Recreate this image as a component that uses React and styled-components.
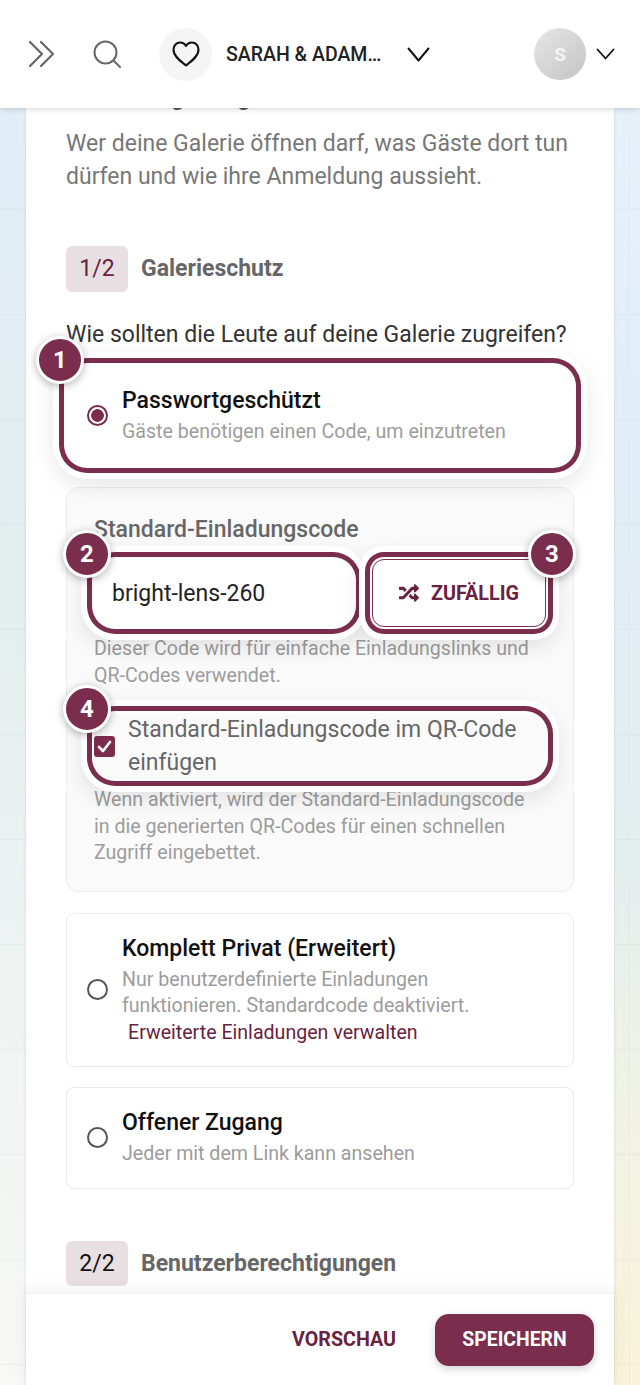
import React from "react";
import styled, { createGlobalStyle } from "styled-components";
import { FaRandom } from "react-icons/fa";

const PLUM = "#7b2d4e";
const PLUM_DARK = "#69223f";

const Global = createGlobalStyle`
  html, body { margin: 0; padding: 0; }
  body { font-family: Roboto, "Liberation Sans", sans-serif; background: #f2f5f5; }
  * { box-sizing: border-box; }
`;

const Page = styled.div`
  width: 640px;
  height: 1385px;
  display: flex;
  flex-direction: column;
  overflow: hidden;
  background-color: #f2f4f2;
  background-image:
    repeating-linear-gradient(180deg, transparent 0 104px, rgba(120, 140, 150, 0.08) 104px 105px),
    repeating-linear-gradient(90deg, transparent 0 104px, rgba(120, 140, 150, 0.06) 104px 105px),
    radial-gradient(circle 520px at 100% 100%, rgba(250, 243, 212, 0.85), rgba(250, 243, 212, 0)),
    linear-gradient(205deg, #e8f2fb 0%, #e1edf7 26%, #e4eeee 53%, #f8f8f5 100%);
`;

const Header = styled.header`
  position: relative;
  z-index: 2;
  flex: 0 0 108px;
  height: 108px;
  background: #fff;
  box-shadow: 0 1px 6px rgba(0, 0, 0, 0.18);
  display: flex;
  align-items: center;
  padding: 0 25px 0 28px;
`;

const PlainIcon = styled.svg`
  display: block;
  flex: none;
  fill: none;
  stroke: ${(p) => p.$color || "#111"};
  stroke-linecap: round;
  stroke-linejoin: round;
`;

const SearchSlot = styled.div`
  margin-left: 37px;
  display: flex;
`;

const HeartCircle = styled.div`
  margin-left: 38px;
  width: 53px;
  height: 53px;
  border-radius: 50%;
  background: #f5f5f5;
  display: flex;
  align-items: center;
  justify-content: center;
`;

const EventName = styled.span`
  margin-left: 14px;
  width: 156px;
  font-size: 19.5px;
  font-weight: 500;
  color: #222;
  white-space: nowrap;
  overflow: hidden;
  text-overflow: ellipsis;
`;

const EventChevron = styled.div`
  margin-left: 25px;
  display: flex;
`;

const Avatar = styled.div`
  margin-left: auto;
  width: 52px;
  height: 52px;
  border-radius: 50%;
  background: linear-gradient(135deg, #e6e6e6 0%, #c4c4c4 100%);
  color: #f5f5f5;
  font-size: 19px;
  font-weight: 700;
  display: flex;
  align-items: center;
  justify-content: center;
`;

const AvatarChevron = styled.div`
  margin-left: 10px;
  display: flex;
`;

const Main = styled.main`
  flex: 1;
  min-height: 0;
  padding: 0 26px;
  display: flex;
`;

const Sheet = styled.div`
  flex: 1;
  min-width: 0;
  background: #fff;
  box-shadow: 0 0 3px rgba(90, 110, 130, 0.2);
  display: flex;
  flex-direction: column;
`;

const Scroll = styled.div`
  flex: 1;
  min-height: 0;
  overflow: hidden;
  padding: 0 40px;
`;

const Heading = styled.h2`
  margin: -25px 0 13.5px;
  font-size: 23px;
  line-height: 30px;
  font-weight: 700;
  color: #555;
`;

const Description = styled.p`
  margin: 0 0 53px;
  font-size: 23px;
  line-height: 33px;
  color: #777;
`;

const SectionRow = styled.div`
  display: flex;
  align-items: center;
  gap: 13px;
`;

const StepTag = styled.span`
  width: 62px;
  height: ${(p) => p.$h}px;
  border-radius: 6px;
  background: #e8dfe3;
  color: ${(p) => p.$color};
  font-size: 23px;
  display: flex;
  align-items: center;
  justify-content: center;
`;

const SectionTitle = styled.span`
  font-size: 23px;
  font-weight: 700;
  color: #666;
`;

const Question = styled.p`
  margin: 26px 0 14px;
  font-size: 23px;
  line-height: 33px;
  color: #333;
`;

const Ring = `
  box-shadow:
    0 0 0 2px #fff,
    0 0 0 7px ${PLUM},
    0 0 0 13px #fff,
    0 8px 22px 12px rgba(0, 0, 0, 0.1);
`;

const OptionCard = styled.div`
  position: relative;
  display: flex;
  align-items: center;
  gap: 14px;
  padding: 20px 30px 20px 20px;
  margin-bottom: ${(p) => p.$mb}px;
  background: #fff;
  border: 1px solid ${(p) => (p.$active ? "#fff" : "#e9e9e9")};
  border-radius: ${(p) => (p.$active ? "21px" : "8px")};
  ${(p) => p.$active && Ring}
`;

const Radio = styled.span`
  flex: none;
  width: 21px;
  height: 21px;
  border-radius: 50%;
  border: 2px solid ${(p) => (p.$on ? PLUM : "#555")};
  background: ${(p) => (p.$on ? `radial-gradient(circle, ${PLUM} 0 6px, #fff 6.6px)` : "#fff")};
`;

const OptionText = styled.div`
  min-width: 0;
`;

const OptionTitle = styled.div`
  font-size: 23px;
  line-height: 30px;
  font-weight: 500;
  color: #111;
  margin-bottom: 3px;
`;

const OptionSub = styled.div`
  font-size: 19.6px;
  line-height: 26.5px;
  color: #9c9c9c;
`;

const ManageLink = styled.span`
  display: block;
  padding-left: 6px;
  color: ${PLUM_DARK};
`;

const Panel = styled.div`
  margin-bottom: 21px;
  padding: 27px 27px 24px;
  background: #fafafa;
  border: 1px solid #eeeeee;
  border-radius: 12px;
`;

const PanelLabel = styled.div`
  font-size: 23px;
  line-height: 30px;
  font-weight: 500;
  color: #666;
  margin-bottom: 14px;
`;

const CodeRow = styled.div`
  display: flex;
  gap: 18px;
  margin-bottom: 9px;
`;

const CodeInput = styled.div`
  position: relative;
  flex: 1;
  height: 68px;
  display: flex;
  align-items: center;
  padding: 0 18px;
  background: #fff;
  border-radius: 21px;
  font-size: 23px;
  color: #222;
  ${Ring}
`;

const ShuffleButton = styled.div`
  position: relative;
  flex: 0 0 174px;
  height: 68px;
  display: flex;
  align-items: center;
  justify-content: center;
  gap: 12px;
  background: #fff;
  border: 1.5px solid ${PLUM};
  border-radius: 12px;
  color: ${PLUM_DARK};
  font-size: 19.8px;
  font-weight: 700;
  ${Ring}
`;

const Hint = styled.div`
  font-size: 19.6px;
  line-height: 26.5px;
  color: #9c9c9c;
  max-width: 445px;
`;

const CheckRow = styled.div`
  position: relative;
  margin-top: 24px;
  margin-bottom: 8px;
  display: flex;
  align-items: center;
  gap: 13px;
  background: #fafafa;
  border-radius: 21px;
  ${Ring}
`;

const CheckBox = styled.span`
  flex: none;
  width: 21px;
  height: 21px;
  border-radius: 3px;
  background: ${PLUM};
  display: flex;
  align-items: center;
  justify-content: center;
`;

const CheckLabel = styled.span`
  font-size: 23px;
  line-height: 33px;
  color: #666;
`;

const Badge = styled.span`
  position: absolute;
  z-index: 1;
  top: ${(p) => p.$top}px;
  ${(p) => (p.$right ? "right: -31px;" : "left: -31px;")}
  width: 48px;
  height: 48px;
  border-radius: 50%;
  border: 3px solid #fff;
  background: ${PLUM};
  color: #fff;
  font-size: 24px;
  font-weight: 700;
  display: flex;
  align-items: center;
  justify-content: center;
  box-shadow: 0 2px 8px rgba(0, 0, 0, 0.3);
`;

const Footer = styled.footer`
  position: relative;
  flex: 0 0 92px;
  display: flex;
  align-items: center;
  justify-content: flex-end;
  gap: 39px;
  padding: 0 20px 0 0;
  background: #fff;
  border-top: 1px solid #f0f0f0;
  box-shadow: 0 -4px 14px rgba(0, 0, 0, 0.06);
`;

const PreviewButton = styled.span`
  color: ${PLUM_DARK};
  font-size: 19.7px;
  font-weight: 700;
`;

const SaveButton = styled.span`
  width: 159px;
  height: 52px;
  border-radius: 14px;
  background: ${PLUM};
  color: #fff;
  font-size: 19.4px;
  font-weight: 700;
  display: flex;
  align-items: center;
  justify-content: center;
  box-shadow: 0 3px 8px rgba(0, 0, 0, 0.18);
`;

const ChevronDown = ({ w, h, sw = 2 }) => (
  <PlainIcon width={w} height={h} viewBox={`0 0 ${w} ${h}`} strokeWidth={sw}>
    <polyline points={`1.5,1.5 ${w / 2},${h - 1.5} ${w - 1.5},1.5`} />
  </PlainIcon>
);

export default function App() {
  return (
    <Page>
      <Global />
      <Header>
        <PlainIcon $color="#666" width="28" height="28" viewBox="0 0 28 28" strokeWidth="2.2">
          <polyline points="2,2 14,14 2,26" />
          <polyline points="13,2 25,14 13,26" />
        </PlainIcon>
        <SearchSlot>
          <PlainIcon $color="#666" width="28" height="28" viewBox="0 0 28 28" strokeWidth="2">
            <circle cx="12.5" cy="12.5" r="11" />
            <line x1="20.5" y1="20.5" x2="27" y2="27" />
          </PlainIcon>
        </SearchSlot>
        <HeartCircle>
          <PlainIcon width="28" height="26" viewBox="0 0 28 26" strokeWidth="2.1">
            <path d="M14 24.5 C9 20.5 1.5 15.5 1.5 8.5 C1.5 4.5 4.5 1.5 8 1.5 C10.5 1.5 12.8 2.8 14 5 C15.2 2.8 17.5 1.5 20 1.5 C23.5 1.5 26.5 4.5 26.5 8.5 C26.5 15.5 19 20.5 14 24.5 Z" />
          </PlainIcon>
        </HeartCircle>
        <EventName>SARAH &amp; ADAM HOCHZEIT</EventName>
        <EventChevron>
          <ChevronDown w={23} h={15} />
        </EventChevron>
        <Avatar>S</Avatar>
        <AvatarChevron>
          <ChevronDown w={19} h={12} sw={1.8} />
        </AvatarChevron>
      </Header>

      <Main>
        <Sheet>
          <Scroll>
            <Heading>Anmeldung &amp; Zugriff</Heading>
            <Description>
              Wer deine Galerie öffnen darf, was Gäste dort tun dürfen und wie ihre Anmeldung aussieht.
            </Description>

            <SectionRow>
              <StepTag $h={46} $color={PLUM_DARK}>1/2</StepTag>
              <SectionTitle>Galerieschutz</SectionTitle>
            </SectionRow>

            <Question>Wie sollten die Leute auf deine Galerie zugreifen?</Question>

            <OptionCard $active $mb={21}>
              <Badge $top={-30}>1</Badge>
              <Radio $on />
              <OptionText>
                <OptionTitle>Passwortgeschützt</OptionTitle>
                <OptionSub>Gäste benötigen einen Code, um einzutreten</OptionSub>
              </OptionText>
            </OptionCard>

            <Panel>
              <PanelLabel>Standard-Einladungscode</PanelLabel>
              <CodeRow>
                <CodeInput>
                  <Badge $top={-29}>2</Badge>
                  bright-lens-260
                </CodeInput>
                <ShuffleButton>
                  <Badge $top={-30} $right>3</Badge>
                  <FaRandom size={20} />
                  ZUFÄLLIG
                </ShuffleButton>
              </CodeRow>
              <Hint>Dieser Code wird für einfache Einladungslinks und QR-Codes verwendet.</Hint>
              <CheckRow>
                <Badge $top={-28}>4</Badge>
                <CheckBox>
                  <PlainIcon $color="#fff" width="15" height="15" viewBox="0 0 15 15" strokeWidth="2.6">
                    <polyline points="2,8 6,12 13,3" />
                  </PlainIcon>
                </CheckBox>
                <CheckLabel>Standard-Einladungscode im QR-Code einfügen</CheckLabel>
              </CheckRow>
              <Hint>
                Wenn aktiviert, wird der Standard-Einladungscode in die generierten QR-Codes für einen schnellen Zugriff eingebettet.
              </Hint>
            </Panel>

            <OptionCard $mb={20}>
              <Radio />
              <OptionText>
                <OptionTitle>Komplett Privat (Erweitert)</OptionTitle>
                <OptionSub>
                  Nur benutzerdefinierte Einladungen funktionieren. Standardcode deaktiviert.
                  <ManageLink>Erweiterte Einladungen verwalten</ManageLink>
                </OptionSub>
              </OptionText>
            </OptionCard>

            <OptionCard $mb={52}>
              <Radio />
              <OptionText>
                <OptionTitle>Offener Zugang</OptionTitle>
                <OptionSub>Jeder mit dem Link kann ansehen</OptionSub>
              </OptionText>
            </OptionCard>

            <SectionRow>
              <StepTag $h={45} $color="#111">2/2</StepTag>
              <SectionTitle>Benutzerberechtigungen</SectionTitle>
            </SectionRow>
          </Scroll>
          <Footer>
            <PreviewButton>VORSCHAU</PreviewButton>
            <SaveButton>SPEICHERN</SaveButton>
          </Footer>
        </Sheet>
      </Main>
    </Page>
  );
}
